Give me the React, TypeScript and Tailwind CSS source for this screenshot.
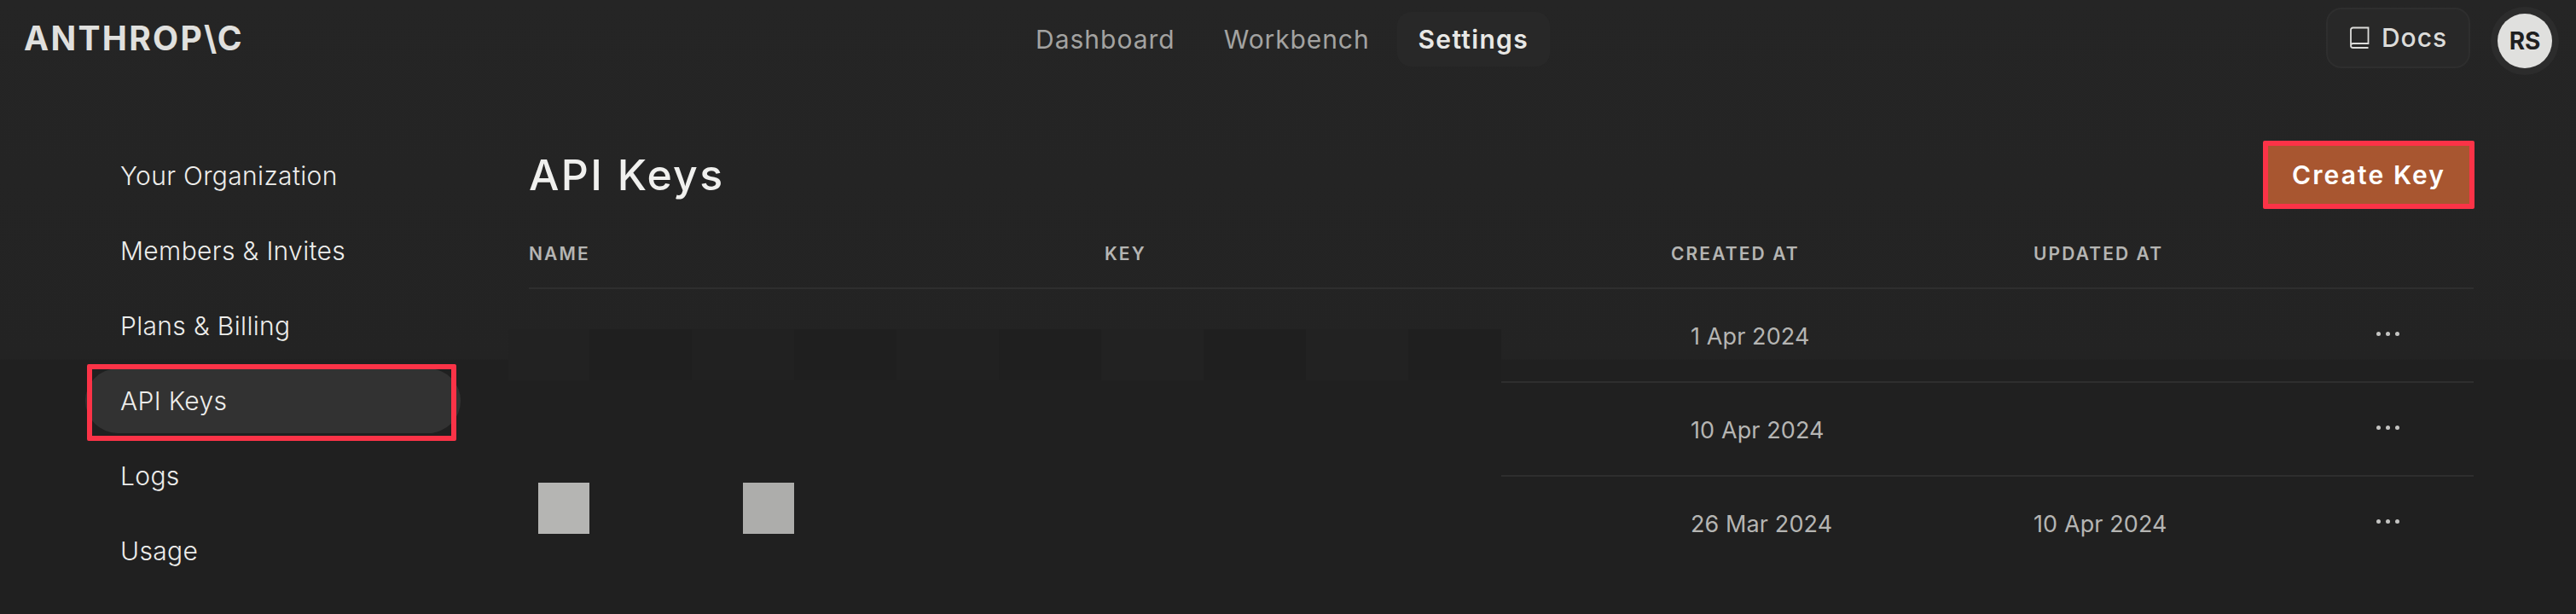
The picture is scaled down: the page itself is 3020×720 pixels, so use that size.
import React from "react";

const font = "[font-family:Inter,'Noto_Sans',sans-serif]";

const sideItems = ["Your Organization", "Members & Invites", "Plans & Billing", "API Keys", "Logs", "Usage"];

const tiles = [
  { w: "w-[95px]", bg: "bg-[#222222]" },
  { w: "w-[120px]", bg: "bg-[#1f1f1f]" },
  { w: "w-[120px]", bg: "bg-[#212121]" },
  { w: "w-[120px]", bg: "bg-[#1f1f1f]" },
  { w: "w-[120px]", bg: "bg-[#212121]" },
  { w: "w-[120px]", bg: "bg-[#1f1f1f]" },
  { w: "w-[120px]", bg: "bg-[#222222]" },
  { w: "w-[120px]", bg: "bg-[#1f1f1f]" },
  { w: "w-[120px]", bg: "bg-[#222222]" },
  { w: "w-[109px]", bg: "bg-[#1f1f1f]" },
];

const rows = [
  { created: "1 Apr 2024", updated: "", kind: "mosaic" },
  { created: "10 Apr 2024", updated: "", kind: "empty" },
  { created: "26 Mar 2024", updated: "10 Apr 2024", kind: "squares" },
];

const BookIcon = () => (
  <svg width="24" height="27" viewBox="0 0 24 27" fill="none" stroke="#dcdcda" strokeWidth="1.8">
    <path d="M2 21.5V4a2.5 2.5 0 0 1 2.5-2.5H22.5V20H4.5A2.5 2.5 0 0 0 2 22.5v0A2.5 2.5 0 0 0 4.5 25H22.5" />
  </svg>
);

const Dots = () => (
  <div className="flex items-center gap-[6px] -translate-y-[3px]">
    <span className="size-[5px] rounded-full bg-[#c4c4c2]" />
    <span className="size-[5px] rounded-full bg-[#c4c4c2]" />
    <span className="size-[5px] rounded-full bg-[#c4c4c2]" />
  </div>
);

const Header = () => (
  <header className="flex h-[92px] items-center pl-[28px] pr-[20px]">
    <div className="w-[1161px] -translate-y-[2px] text-[39px] leading-none font-bold tracking-[2.3px] text-[#e0e0de]">
      {"ANTHROP\\C"}
    </div>
    <nav className="flex items-center gap-[7px] text-[30px] leading-none">
      <a className="px-[25px] tracking-[1px] text-[#a3a3a1]">Dashboard</a>
      <a className="px-[25px] tracking-[0.9px] text-[#a3a3a1]">Workbench</a>
      <a className="flex h-[64px] items-center rounded-[16px] bg-[#282828] px-[25px] font-semibold tracking-[1.3px] text-[#e8e8e6]">
        Settings
      </a>
    </nav>
    <div className="ml-auto flex items-center gap-[32px]">
      <button className="flex h-[71px] w-[169px] -translate-y-[2px] items-center justify-center gap-[14px] rounded-[18px] border-2 border-[#2e2e2e] bg-[#282828] text-[30px] font-medium tracking-[1px] text-[#dcdcda]">
        <BookIcon />
        Docs
      </button>
      <div className="flex size-[64px] items-center justify-center rounded-full bg-[#e0e0de] text-[28px] font-bold text-[#1f1f1f] ring-8 ring-[#2c2c2c] translate-y-[2px] mr-[8px]">
        RS
      </div>
    </div>
  </header>
);

const Sidebar = () => (
  <aside className="ml-[100px] flex w-[440px] shrink-0 flex-col gap-[12px]">
    {sideItems.map((item) => (
      <a
        key={item}
        className={
          "relative flex h-[76px] items-center rounded-full pl-[41px] pb-[1px] text-[30px] leading-none font-[350] tracking-[0.35px] text-[#ededeb] " +
          (item === "API Keys" ? "bg-[#323232]" : "")
        }
      >
        {item}
        {item === "API Keys" && (
          <span className="absolute -top-[5px] left-[2px] h-[90px] w-[433px] rounded-[2px] border-[6px] border-[#fb3347]" />
        )}
      </a>
    ))}
  </aside>
);

const KeysTable = () => (
  <div className="flex flex-col">
    <div className="grid h-[99px] grid-cols-[675px_664px_425px_1fr] items-center border-b-2 border-[#2e2e2e] pt-[17px] text-[21px] leading-none font-semibold tracking-[2.1px] text-[#b5b5b3]">
      <span>NAME</span>
      <span>KEY</span>
      <span>CREATED AT</span>
      <span>UPDATED AT</span>
    </div>
    {rows.map((row, i) => (
      <div key={row.created}>
        <div className="grid h-[108px] grid-cols-[1339px_425px_402px_1fr] items-center pt-[2px] text-[27px] leading-none tracking-[0.1px] text-[#b5b5b3]">
          <div className="h-full">
            {row.kind === "mosaic" && (
              <div className="-ml-[24px] mt-[45px] flex h-[60px]">
                {tiles.map((t, n) => (
                  <span key={n} className={t.w + " " + t.bg} />
                ))}
              </div>
            )}
            {row.kind === "squares" && (
              <div className="ml-[11px] mt-[5px] flex h-[60px] gap-[180px]">
                <span className="w-[60px] bg-[#b5b5b3]" />
                <span className="w-[60px] bg-[#adadab]" />
              </div>
            )}
          </div>
          <span className="pl-[23px]">{row.created}</span>
          <span>{row.updated}</span>
          <Dots />
        </div>
        {i < rows.length - 1 && <div className="ml-[1140px] h-[2px] bg-[#2e2e2e]" />}
      </div>
    ))}
  </div>
);

export default function App() {
  return (
    <div
      className={
        font +
        " h-[720px] w-[3020px] overflow-hidden bg-[linear-gradient(to_bottom,#252525_0px,#232323_421px,#202020_422px,#202020_720px)]"
      }
    >
      <Header />
      <main className="flex pt-[76px]">
        <Sidebar />
        <section className="ml-[80px] mt-[2px] w-[2280px]">
          <div className="flex h-[70px] items-center justify-between">
            <h1 className="text-[50px] leading-none font-medium tracking-[2.3px] text-[#f0f0ee]">API Keys</h1>
            <button className="relative mr-[5px] flex h-[68px] w-[236px] items-center justify-center bg-[#a85630] text-[30px] font-semibold tracking-[2.1px] text-white">
              Create Key
              <span className="absolute -inset-[6px] rounded-[2px] border-[6px] border-[#fb3347]" />
            </button>
          </div>
          <KeysTable />
        </section>
      </main>
    </div>
  );
}
